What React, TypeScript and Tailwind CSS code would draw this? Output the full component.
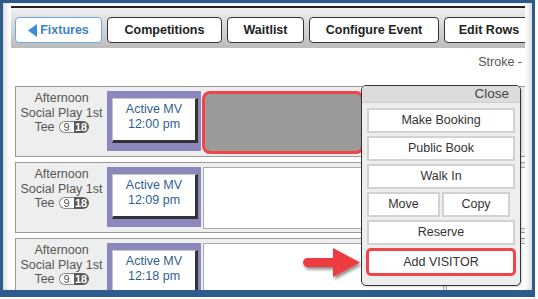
import React from "react";

function Badge() {
  return (
    <span className="inline-flex h-[12px] items-stretch">
      <span className="flex w-[15px] items-center justify-center rounded-l-full border border-r-0 border-[#8a8a8a] bg-white text-[11px] leading-[10px] text-[#555]">
        9
      </span>
      <span className="flex w-[15px] items-center justify-center rounded-r-full bg-[#5a5a5a] text-[11px] font-bold leading-[10px] text-white">
        18
      </span>
    </span>
  );
}

function Row({ time, selected }: { time: string; selected?: boolean }) {
  return (
    <div className="flex h-[71px] w-[520px] shrink-0 border border-[#9a9a9a] bg-[#eeeeee]">
      <div className="w-[91px] shrink-0 pt-[4px] text-center text-[12.5px] leading-[14.5px] text-[#555]">
        <div>Afternoon</div>
        <div>Social Play 1st</div>
        <div className="flex items-center justify-center gap-[4px]">
          <span>Tee</span>
          <Badge />
        </div>
      </div>
      <div className="mt-[4px] h-[60px] w-[94px] shrink-0 bg-[#8b88bd] pl-[5px] pt-[7px]">
        <div className="flex h-[45px] w-[86px] flex-col items-center border-b-[3px] border-l border-r-[3px] border-t border-b-[#333] border-l-[#c4c4c4] border-r-[#333] border-t-[#c4c4c4] bg-white pt-[3px] text-[12.5px] leading-[15px] text-[#2f5f90]">
          <div>Active MV</div>
          <div>{time}</div>
        </div>
      </div>
      {selected ? (
        <div className="ml-[1px] mt-[4px] h-[63px] w-[162px] shrink-0 rounded-[8px] border-[3px] border-[#f04448] bg-[#9a9a9a]" />
      ) : (
        <>
          <div className="ml-[2px] mt-[4px] h-[62px] w-[241px] shrink-0 border border-[#aaaaaa] bg-white" />
          <div className="ml-[2px] mt-[4px] h-[62px] w-[80px] shrink-0 border border-[#aaaaaa] bg-white" />
        </>
      )}
    </div>
  );
}

function PopBtn({ children, className = "" }: { children: React.ReactNode; className?: string }) {
  return (
    <div
      className={
        "flex h-[25px] items-center justify-center border-2 border-[#d2d2d2] bg-white text-[12.5px] text-[#333] " +
        className
      }
    >
      {children}
    </div>
  );
}

export default function App() {
  return (
    <div className="relative h-[299px] w-[538px] overflow-hidden bg-white font-['Liberation_Sans',Arial,sans-serif]">
      <div className="h-[297px] w-[535px] border-b-[7px] border-l-[3px] border-r-[3px] border-t-[3px] border-[#2d5b8b]">
        <div className="h-full w-full overflow-hidden bg-white pl-[8px] pt-[3px] shadow-[inset_5px_0_6px_-3px_rgba(0,0,0,0.18),inset_-5px_0_6px_-3px_rgba(0,0,0,0.18)]">
          {/* toolbar */}
          <div className="flex h-[42px] w-[514px] gap-[5px] overflow-hidden border-t-2 border-[#222] bg-linear-to-b from-[#efefef] to-[#bcbcbc] pl-[4px] pt-[9px]">
            <div className="flex h-[26px] w-[87px] shrink-0 items-center justify-center gap-[3px] rounded-[4px] border border-[#6aa8e0] bg-white text-[12.5px] font-bold text-[#3d82c4]">
              <svg width="9" height="13" viewBox="0 0 9 13" className="shrink-0">
                <path d="M9 0 L0 6.5 L9 13 Z" fill="#3d8ad8" />
              </svg>
              <span>Fixtures</span>
            </div>
            <div className="flex h-[26px] w-[115px] shrink-0 items-center justify-center rounded-[4px] border border-[#333] bg-white text-[12.5px] font-bold text-[#222]">
              Competitions
            </div>
            <div className="flex h-[26px] w-[77px] shrink-0 items-center justify-center rounded-[4px] border border-[#333] bg-white text-[12.5px] font-bold text-[#222]">
              Waitlist
            </div>
            <div className="flex h-[26px] w-[130px] shrink-0 items-center justify-center rounded-[4px] border border-[#333] bg-white text-[12.5px] font-bold text-[#222]">
              Configure Event
            </div>
            <div className="flex h-[26px] w-[90px] shrink-0 items-center justify-center rounded-[4px] border border-[#333] bg-white text-[12.5px] font-bold text-[#222]">
              Edit Rows
            </div>
          </div>
          {/* stroke line */}
          <div className="h-[38px] w-[514px] pr-[3px] pt-[7px] text-right text-[12.5px] leading-[15px] text-[#555]">
            Stroke -
          </div>
          {/* rows */}
          <div className="ml-[4px] flex w-[510px] flex-col gap-[5px] overflow-hidden">
            <Row time="12:00 pm" selected />
            <Row time="12:09 pm" />
            <Row time="12:18 pm" />
          </div>
        </div>
      </div>

      {/* popup menu */}
      <div className="absolute left-[361px] top-[85px] flex h-[201px] w-[160px] flex-col rounded-[5px] border border-[#333] bg-[#eeeeee] shadow-[1px_1px_2px_rgba(0,0,0,0.15)]">
        <div className="h-[17px] rounded-t-[4px] border-b border-[#cfcfcf] bg-[#dcdcdc] pr-[11px] text-right text-[13.5px] leading-[16px] text-[#444]">
          Close
        </div>
        <div className="flex flex-col gap-[3px] px-[5px] pt-[5px]">
          <PopBtn>Make Booking</PopBtn>
          <PopBtn>Public Book</PopBtn>
          <PopBtn>Walk In</PopBtn>
          <div className="flex gap-[2px]">
            <PopBtn className="w-[73px]">Move</PopBtn>
            <PopBtn className="w-[68px]">Copy</PopBtn>
          </div>
          <PopBtn>Reserve</PopBtn>
          <div className="-mx-[1px] flex h-[28px] items-center justify-center rounded-[5px] border-[3px] border-[#f04448] bg-white text-[12.5px] text-[#333]">
            Add VISITOR
          </div>
        </div>
      </div>

      {/* red arrow */}
      <svg
        className="absolute left-[298px] top-[243px]"
        width="68"
        height="42"
        viewBox="0 0 68 42"
      >
        <defs>
          <filter id="arrowShadow" x="-20%" y="-20%" width="150%" height="160%">
            <feDropShadow dx="1.5" dy="2.5" stdDeviation="1.5" floodColor="#000" floodOpacity="0.45" />
          </filter>
        </defs>
        <path
          d="M9.5 15 H35 V5 L62 19.5 L35 34 V24 H9.5 A4.5 4.5 0 0 1 9.5 15 Z"
          fill="#ee3b3f"
          filter="url(#arrowShadow)"
        />
      </svg>
    </div>
  );
}
